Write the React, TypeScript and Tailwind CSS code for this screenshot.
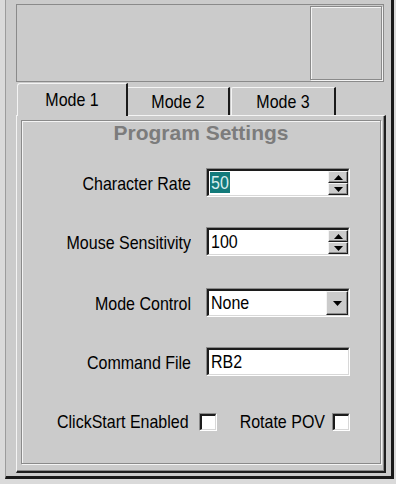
import React from 'react';

const LABEL = "font-['Liberation_Sans',Arial,sans-serif] text-[16px] leading-[18px] text-black whitespace-nowrap";

// the old bitmap font is taller than Arial at the same width, so stretch a little
function T({ children, className = '' }: { children: React.ReactNode; className?: string }) {
    return <span className={`inline-block scale-y-[1.2] ${LABEL} ${className}`}>{children}</span>;
}

function Triangle({ up }: { up?: boolean }) {
    return (
        <svg width="9" height="5" viewBox="0 0 9 5">
            <polygon points={up ? '4.5,0 9,5 0,5' : '0,0 9,0 4.5,5'} fill="#000" />
        </svg>
    );
}

// raised win95 style button face
function Raised({ children, className = '' }: { children?: React.ReactNode; className?: string }) {
    return (
        <div
            className={`flex items-center justify-center bg-[#cbcbcb] border-t border-l border-t-[#f4f4f4] border-l-[#f4f4f4] border-b border-r border-b-[#1c1c1c] border-r-[#1c1c1c] shadow-[inset_-1px_-1px_0_#8a8a8a] ${className}`}
        >
            {children}
        </div>
    );
}

// sunken field (edit box, combo, checkbox)
function Sunken({ children, className = '' }: { children?: React.ReactNode; className?: string }) {
    return (
        <div className={`shrink-0 border-t border-l border-t-[#8a8a8a] border-l-[#8a8a8a] border-b border-r border-b-white border-r-white ${className}`}>
            <div className="h-full flex items-center bg-white border-t-2 border-l-2 border-t-[#1c1c1c] border-l-[#1c1c1c] border-b border-r border-b-[#d8d8d8] border-r-[#d8d8d8]">
                {children}
            </div>
        </div>
    );
}

function Spin() {
    return (
        <div className="ml-auto flex flex-col w-[20px] h-full">
            <Raised className="flex-1">
                <Triangle up />
            </Raised>
            <Raised className="flex-1">
                <Triangle />
            </Raised>
        </div>
    );
}

function Row({ label, children, className = '' }: { label: string; children: React.ReactNode; className?: string }) {
    return (
        <div className={`flex items-center ${className}`}>
            <div className="w-[169px] text-right">
                <T className="origin-right">{label}</T>
            </div>
            <Sunken className="ml-[15px] w-[144px] h-[29px]">{children}</Sunken>
        </div>
    );
}

export default function App() {
    return (
        <div className="w-[396px] h-[484px] bg-[#dadada] overflow-hidden">
            <div className="ml-[5px] w-[389px] h-[479px] bg-[#cbcbcb] border-l border-l-[#9c9c9c] border-r-[3px] border-r-[#1a1a1a] border-b-[3px] border-b-[#1a1a1a] pl-[10px] pt-[4px]">
                {/* top panel */}
                <div className="w-[368px] h-[78px] border border-[#8a8a8a] flex justify-end items-start">
                    <div className="mt-[1px] mr-[1px] w-[72px] h-[74px] border border-[#8a8a8a] shadow-[inset_1px_1px_0_#f4f4f4,1px_1px_0_#f4f4f4]" />
                </div>

                {/* tab control */}
                <div className="w-[370px] mt-[1px]">
                    <div className="relative z-10 flex items-end h-[32px]">
                        <div className="ml-[1px] w-[111px] h-[33px] -mb-[1px] bg-[#cbcbcb] border-t border-l border-t-[#f4f4f4] border-l-[#f4f4f4] border-r-2 border-r-[#1a1a1a] rounded-tl-[3px] flex items-center justify-center pb-[1px]">
                            <T>Mode 1</T>
                        </div>
                        <div className="w-[102px] h-[28px] border-t border-t-[#f4f4f4] border-r-2 border-r-[#1a1a1a] flex items-center justify-center">
                            <T>Mode 2</T>
                        </div>
                        <div className="ml-[1px] w-[105px] h-[28px] border-t border-l border-t-[#f4f4f4] border-l-[#f4f4f4] border-r-2 border-r-[#1a1a1a] rounded-tl-[2px] flex items-center justify-center">
                            <T>Mode 3</T>
                        </div>
                    </div>

                    <div className="h-[358px] border-t border-l border-t-[#f4f4f4] border-l-[#f4f4f4] border-r-2 border-b-2 border-r-[#1e1e1e] border-b-[#1e1e1e] shadow-[inset_-1px_-1px_0_#8a8a8a] pl-[4px] pt-[4px]">
                        <div className="w-[360px] h-[344px] border border-[#8a8a8a] shadow-[inset_1px_1px_0_#f4f4f4,1px_1px_0_#f4f4f4] flex flex-col">
                            <div className="mt-[2px] text-center font-['Liberation_Sans',Arial,sans-serif] font-bold text-[21px] leading-[20px] text-[#7c7c7c]">
                                Program Settings
                            </div>

                            <Row label="Character Rate" className="mt-[25px]">
                                <div className="ml-[1px] self-start mt-[1px] h-[21px] px-[1px] bg-[#137a7a] flex items-center">
                                    <T className="!text-[#d8eeee]">50</T>
                                </div>
                                <Spin />
                            </Row>

                            <Row label="Mouse Sensitivity" className="mt-[30px]">
                                <T className="ml-[2px]">100</T>
                                <Spin />
                            </Row>

                            <Row label="Mode Control" className="mt-[32px]">
                                <T className="ml-[2px]">None</T>
                                <Raised className="ml-auto w-[22px] h-full">
                                    <Triangle />
                                </Raised>
                            </Row>

                            <Row label="Command File" className="mt-[30px]">
                                <T className="ml-[2px]">RB2</T>
                            </Row>

                            <div className="mt-[37px] flex items-center pl-[35px]">
                                <T>ClickStart Enabled</T>
                                <Sunken className="ml-[10px] w-[18px] h-[18px]" />
                                <T className="ml-[23px]">Rotate POV</T>
                                <Sunken className="ml-[7px] w-[18px] h-[18px]" />
                            </div>
                        </div>
                    </div>
                </div>
            </div>
        </div>
    );
}
